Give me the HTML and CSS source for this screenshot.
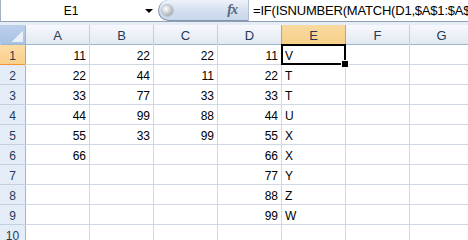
FILE: index.html
```html
<!DOCTYPE html>
<html lang="en">
<head>
    <meta charset="UTF-8">
    <title>Sheet1</title>
    <link rel="stylesheet" href="styles.css">
</head>
<body>
    <div class="formula-bar">
        <div class="name-box">
            <span class="cell-ref">E1</span>
            <span class="drop-arrow"></span>
        </div>
        <div class="fx-pill">
            <span class="knob"></span>
            <span class="fx">fx</span>
        </div>
        <div class="formula">=IF(ISNUMBER(MATCH(D1,$A$1:$A$6,0)),</div>
    </div>
    <div class="band"></div>

    <div class="sheet">
        <div class="corner"><span class="corner-tri"></span></div>
        <div class="col-hdr">A</div>
        <div class="col-hdr">B</div>
        <div class="col-hdr">C</div>
        <div class="col-hdr">D</div>
        <div class="col-hdr active">E</div>
        <div class="col-hdr">F</div>
        <div class="col-hdr">G</div>

        <div class="row-hdr active">1</div>
        <div class="cell num">11</div><div class="cell num">22</div><div class="cell num">22</div><div class="cell num">11</div><div class="cell text selected">V</div><div class="cell"></div><div class="cell"></div>

        <div class="row-hdr">2</div>
        <div class="cell num">22</div><div class="cell num">44</div><div class="cell num">11</div><div class="cell num">22</div><div class="cell text">T</div><div class="cell"></div><div class="cell"></div>

        <div class="row-hdr">3</div>
        <div class="cell num">33</div><div class="cell num">77</div><div class="cell num">33</div><div class="cell num">33</div><div class="cell text">T</div><div class="cell"></div><div class="cell"></div>

        <div class="row-hdr">4</div>
        <div class="cell num">44</div><div class="cell num">99</div><div class="cell num">88</div><div class="cell num">44</div><div class="cell text">U</div><div class="cell"></div><div class="cell"></div>

        <div class="row-hdr">5</div>
        <div class="cell num">55</div><div class="cell num">33</div><div class="cell num">99</div><div class="cell num">55</div><div class="cell text">X</div><div class="cell"></div><div class="cell"></div>

        <div class="row-hdr">6</div>
        <div class="cell num">66</div><div class="cell"></div><div class="cell"></div><div class="cell num">66</div><div class="cell text">X</div><div class="cell"></div><div class="cell"></div>

        <div class="row-hdr">7</div>
        <div class="cell"></div><div class="cell"></div><div class="cell"></div><div class="cell num">77</div><div class="cell text">Y</div><div class="cell"></div><div class="cell"></div>

        <div class="row-hdr">8</div>
        <div class="cell"></div><div class="cell"></div><div class="cell"></div><div class="cell num">88</div><div class="cell text">Z</div><div class="cell"></div><div class="cell"></div>

        <div class="row-hdr">9</div>
        <div class="cell"></div><div class="cell"></div><div class="cell"></div><div class="cell num">99</div><div class="cell text">W</div><div class="cell"></div><div class="cell"></div>

        <div class="row-hdr">10</div>
        <div class="cell"></div><div class="cell"></div><div class="cell"></div><div class="cell"></div><div class="cell"></div><div class="cell"></div><div class="cell"></div>
    </div>
</body>
</html>
```

FILE: styles.css
```css
:root {
    --grid-line: #d0d7e5;
    --hdr-line: #c5d0de;
    --hdr-edge: #9eb6ce;
    --hdr-text: #243a57;
    --hl-edge: #f29536;
}
* {
    margin: 0;
    padding: 0;
    box-sizing: border-box;
}
body {
    font-family: 'Liberation Sans', Arial, sans-serif;
    background: #ffffff;
    width: 468px;
    height: 240px;
    overflow: hidden;
}

/* formula bar */
.formula-bar {
    display: flex;
    height: 22px;
    border-left: 1px solid #a3b1c2;
    border-bottom: 1px solid #8fa1b8;
    background: #ffffff;
}
.name-box {
    width: 157px;
    display: flex;
    align-items: center;
}
.cell-ref {
    width: 140px;
    text-align: center;
    font-size: 12px;
    line-height: 21px;
    padding-top: 1px;
    color: #000;
}
.drop-arrow {
    width: 0;
    height: 0;
    margin-left: 4px;
    border-left: 4px solid transparent;
    border-right: 4px solid transparent;
    border-top: 4px solid #000;
}
.fx-pill {
    width: 90px;
    height: 21px;
    display: flex;
    align-items: center;
    justify-content: space-between;
    padding: 0 11px 0 3px;
    border: 1px solid #8493a8;
    border-right: none;
    border-top: none;
    border-radius: 11px 0 0 11px;
    background: linear-gradient(#eef3fa, #d3dfef 55%, #c8d7ec);
}
.knob {
    width: 11px;
    height: 11px;
    border-radius: 50%;
    background: radial-gradient(circle at 35% 35%, #ffffff, #c9cdd3 45%, #8c939c);
    box-shadow: 0 0 0 1px #b9c2cd;
}
.fx {
    font-family: 'Liberation Serif', 'Times New Roman', serif;
    font-style: italic;
    font-weight: bold;
    font-size: 14px;
    color: #56657a;
    letter-spacing: -1px;
}
.formula {
    flex: 1;
    border-left: 1px solid #b3c0d0;
    padding-left: 4px;
    font-size: 13px;
    letter-spacing: -0.2px;
    line-height: 21px;
    white-space: nowrap;
    overflow: hidden;
    color: #000;
}
.band {
    height: 3px;
    background: #e6edf6;
}

/* sheet grid */
.sheet {
    display: grid;
    grid-template-columns: 25px repeat(7, 63px);
    grid-auto-rows: 19px;
    gap: 1px;
    background: var(--grid-line);
    width: 473px;
}
.corner {
    position: relative;
    background: linear-gradient(#bcd0ea, #a9c2e4);
    box-shadow: 1px 1px 0 var(--hdr-edge);
}
.corner-tri {
    position: absolute;
    right: 2px;
    bottom: 2px;
    width: 11px;
    height: 11px;
    background: linear-gradient(to bottom right, transparent 50%, #e9eff8 50%);
}
.col-hdr {
    background: linear-gradient(#f6f8fc, #e3e9f2);
    box-shadow: 0 1px 0 var(--hdr-edge), 1px 0 0 var(--hdr-line);
    text-align: center;
    font-size: 13px;
    line-height: 17px;
    padding-top: 2px;
    color: var(--hdr-text);
}
.row-hdr {
    background: #e4ecf7;
    box-shadow: 1px 0 0 var(--hdr-edge), 0 1px 0 var(--hdr-line);
    text-align: center;
    font-size: 12px;
    line-height: 15px;
    padding-top: 4px;
    color: var(--hdr-text);
}
.col-hdr.active {
    background: linear-gradient(#f9d99f, #f8d18a);
    box-shadow: 0 1px 0 var(--hl-edge), 1px 0 0 var(--hl-edge), -1px 0 0 var(--hl-edge);
    position: relative;
}
.row-hdr.active {
    background: linear-gradient(#fcdca6, #f9cf8a);
    box-shadow: 1px 0 0 var(--hl-edge), 0 1px 0 var(--hl-edge);
    position: relative;
}
.cell {
    background: #ffffff;
    font-size: 12px;
    line-height: 15px;
    padding: 4px 3px 0;
    color: #000;
    white-space: nowrap;
}
.cell.num {
    text-align: right;
}
.cell.selected {
    position: relative;
    z-index: 1;
    outline: 2px solid #000;
    outline-offset: -1px;
}
.cell.selected::after {
    content: "";
    position: absolute;
    right: -4px;
    bottom: -4px;
    width: 6px;
    height: 6px;
    background: #000;
    border: 1px solid #fff;
}
```
